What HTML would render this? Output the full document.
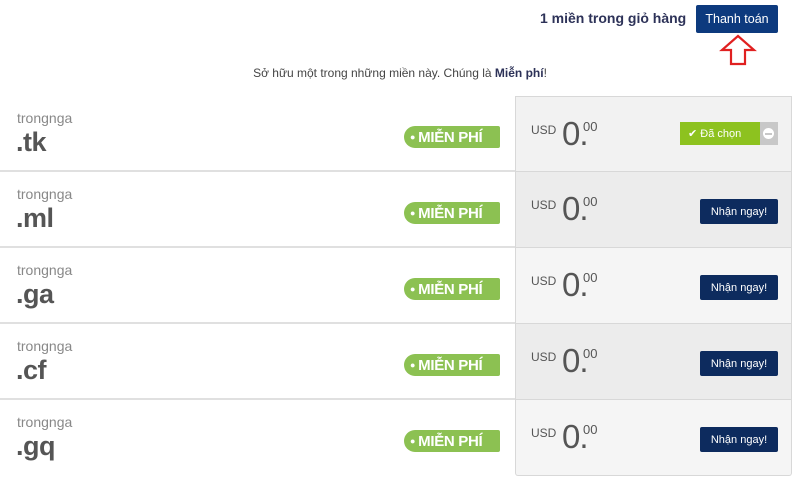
<!DOCTYPE html>
<html><head><meta charset="utf-8"><style>
*{margin:0;padding:0;box-sizing:border-box}
body{width:800px;height:484px;background:#fff;font-family:"Liberation Sans",sans-serif;position:relative;overflow:hidden;color:#555}
.abs{position:absolute}
.fc{display:flex;align-items:center;justify-content:center}
.cart{left:540px;top:10px;font-size:14px;font-weight:bold;color:#2d3258;line-height:16px}
.pay{left:696px;top:5px;width:82px;height:28px;background:#0d3a7e;border-radius:2px;color:#fff;font-size:12.5px}
.note{left:0;width:800px;top:66px;text-align:center;font-size:12px;color:#444;line-height:14px}
.row{left:0;width:515px;height:76px;border-bottom:2px solid #e0e0e0}
.sub{left:17px;font-size:14px;color:#888;line-height:16px}
.tld{left:16px;font-size:27px;color:#555;line-height:30px;font-weight:bold;letter-spacing:-0.5px}
.badge{left:404px;width:96px;height:22px;background:#8cc152;border-radius:11px 2px 2px 11px;color:#fff;font-weight:bold;font-size:15px;padding-left:6px;letter-spacing:-0.3px;display:flex;align-items:center}
.badge b{font-size:9px;margin-right:3px}
.box{left:515px;width:277px;height:76px;border:1px solid #d8d8d8;border-top:none}
.usd{left:15px;top:26px;font-size:12px;color:#555;line-height:14px}
.big{left:46px;top:20px;font-size:33px;color:#555;line-height:34px;letter-spacing:-1px}
.sup{left:67px;top:22px;font-size:13px;color:#555;line-height:15px}
.get{left:184px;top:27px;width:78px;height:25px;background:#0d2b5e;border-radius:2px;color:#fff;font-size:11px}
</style></head><body>
<div class="abs cart">1 miền trong giỏ hàng</div>
<div class="abs pay fc">Thanh toán</div>
<svg class="abs" style="left:718px;top:34px" width="40" height="32" viewBox="0 0 40 32"><path d="M20 2 L36 16 L27 16 L27 30 L13 30 L13 16 L4 16 Z" fill="#fff" stroke="#e02020" stroke-width="2.2"/></svg>
<div class="abs note">Sở hữu một trong những miền này. Chúng là <b style="color:#2d3258">Miễn phí</b>!</div>

<div class="abs box" style="top:96px;border-top:1px solid #d8d8d8;background:#f2f2f2">
<div class="abs usd">USD</div><div class="abs big">0.</div><div class="abs sup">00</div>
<div class="abs" style="left:164px;top:25px;width:80px;height:23px;background:#8dc21f;color:#fff;font-size:11px;display:flex;align-items:center;padding-left:8px">✔ Đã chọn</div>
<div class="abs" style="left:244px;top:25px;width:18px;height:23px;background:#c8c8c8"><div style="margin:6px 3px;width:11px;height:11px;border-radius:50%;background:#fff;position:relative"><div style="position:absolute;left:2px;top:5px;width:7px;height:1.5px;background:#c8c8c8"></div></div></div>
</div>
<div class="abs box" style="top:172px;background:#ececec"><div class="abs usd">USD</div><div class="abs big">0.</div><div class="abs sup">00</div><div class="abs get fc">Nhận ngay!</div></div>
<div class="abs box" style="top:248px;background:#f5f5f5"><div class="abs usd">USD</div><div class="abs big">0.</div><div class="abs sup">00</div><div class="abs get fc">Nhận ngay!</div></div>
<div class="abs box" style="top:324px;background:#ececec"><div class="abs usd">USD</div><div class="abs big">0.</div><div class="abs sup">00</div><div class="abs get fc">Nhận ngay!</div></div>
<div class="abs box" style="top:400px;height:76px;background:#f5f5f5;border-radius:0 0 3px 3px"><div class="abs usd">USD</div><div class="abs big">0.</div><div class="abs sup">00</div><div class="abs get fc">Nhận ngay!</div></div>

<div class="abs row" style="top:96px"><div class="abs sub" style="top:14px">trongnga</div><div class="abs tld" style="top:31px">.tk</div><div class="abs badge" style="top:30px"><b>●</b>MIỄN PHÍ</div></div>
<div class="abs row" style="top:172px"><div class="abs sub" style="top:14px">trongnga</div><div class="abs tld" style="top:31px">.ml</div><div class="abs badge" style="top:30px"><b>●</b>MIỄN PHÍ</div></div>
<div class="abs row" style="top:248px"><div class="abs sub" style="top:14px">trongnga</div><div class="abs tld" style="top:31px">.ga</div><div class="abs badge" style="top:30px"><b>●</b>MIỄN PHÍ</div></div>
<div class="abs row" style="top:324px"><div class="abs sub" style="top:14px">trongnga</div><div class="abs tld" style="top:31px">.cf</div><div class="abs badge" style="top:30px"><b>●</b>MIỄN PHÍ</div></div>
<div class="abs row" style="top:400px;border-bottom:none"><div class="abs sub" style="top:14px">trongnga</div><div class="abs tld" style="top:31px">.gq</div><div class="abs badge" style="top:30px"><b>●</b>MIỄN PHÍ</div></div>
</body></html>
